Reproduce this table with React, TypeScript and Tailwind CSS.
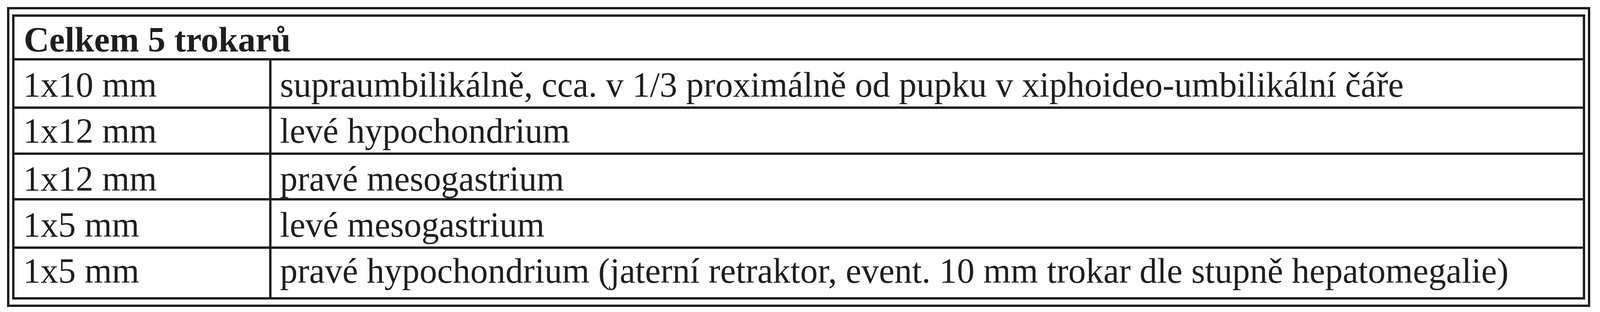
import React from "react";

const rows = [
  { size: "1x10 mm", place: "supraumbilikálně, cca. v 1/3 proximálně od pupku v xiphoideo-umbilikální čáře", cls: "h-[118px] pt-[18px]" },
  { size: "1x12 mm", place: "levé hypochondrium", cls: "h-[112px] pt-[12px]" },
  { size: "1x12 mm", place: "pravé mesogastrium", cls: "h-[111px] pt-[17px]" },
  { size: "1x5 mm", place: "levé mesogastrium", cls: "h-[118px] pt-[18px]" },
  { size: "1x5 mm", place: "pravé hypochondrium (jaterní retraktor, event. 10 mm trokar dle stupně hepatomegalie)", cls: "h-[124px] pt-[12px]" },
];

export default function App() {
  return (
    <div className="min-h-[800px] w-full bg-white pt-[18px] pl-[18px] pr-[25px]">
      <div
        className="w-full border-[6px] border-[#1f1d1d] px-[7px] py-[13px] text-[90px] leading-[90px] text-[#1f1d1d]"
        style={{ fontFamily: '"Liberation Serif", "Times New Roman", serif' }}
      >
        <div className="flex flex-col border-[6px] border-[#1f1d1d]">
          <div className="h-[106px] pl-[24px] pt-[14px] font-bold whitespace-nowrap">Celkem 5 trokarů</div>
          {rows.map((r, i) => (
            <div key={i} className="flex border-t-[6px] border-[#1f1d1d]">
              <div className={`w-[16.23%] shrink-0 pl-[22px] whitespace-nowrap ${r.cls}`}>{r.size}</div>
              <div className={`min-w-0 flex-1 border-l-[6px] border-[#1f1d1d] pl-[22px] whitespace-nowrap ${r.cls}`}>{r.place}</div>
            </div>
          ))}
        </div>
      </div>
    </div>
  );
}
